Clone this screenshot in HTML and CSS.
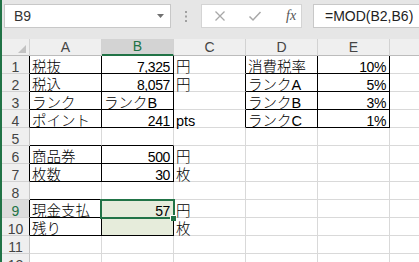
FILE: index.html
```html
<!doctype html>
<html lang="ja">

<head>
    <meta charset="UTF-8">
    <title>Sheet1</title>
    <link rel="stylesheet" href="styles.css">
</head>

<body>
    <div class="app">
        <div class="fbar">
            <div class="namebox">
                <span>B9</span>
                <svg class="drop" width="7" height="4" viewBox="0 0 7 4"><polygon points="0,0 7,0 3.5,4" fill="#707070"/></svg>
            </div>
            <div class="grip">
                <svg width="2" height="11" viewBox="0 0 2 11"><rect x="0" y="0" width="2" height="2" fill="#a0a0a0"/><rect x="0" y="4.5" width="2" height="2" fill="#a0a0a0"/><rect x="0" y="9" width="2" height="2" fill="#a0a0a0"/></svg>
            </div>
            <div class="fxbox">
                <svg class="ico" width="14" height="14" viewBox="0 0 14 14"><path d="M2.5 2.5 L11.5 11.5 M11.5 2.5 L2.5 11.5" stroke="#a8a8a8" stroke-width="1.3" fill="none"/></svg>
                <svg class="ico ok" width="14" height="14" viewBox="0 0 14 14"><path d="M1.5 7.5 L5 11 L12.5 3" stroke="#a8a8a8" stroke-width="1.5" fill="none"/></svg>
                <span class="fx">fx</span>
            </div>
            <div class="formula">=MOD(B2,B6)</div>
        </div>

        <table class="sheet">
            <colgroup>
                <col class="c-rh">
                <col class="c-col"><col class="c-col"><col class="c-col"><col class="c-col"><col class="c-col"><col class="c-col">
            </colgroup>
            <tr class="hdr">
                <th class="corner"><svg width="10" height="10" viewBox="0 0 10 10"><polygon points="9,1 9,9 1,9" fill="#c2c2c2"/></svg></th>
                <th>A</th><th class="sel">B</th><th>C</th><th>D</th><th>E</th><th></th>
            </tr>
            <tr>
                <td class="rh kr">1</td><td class="k">税抜</td><td class="k n">7,325</td><td class="kr">円</td><td class="k">消費税率</td><td class="k n">10%</td><td></td>
            </tr>
            <tr>
                <td class="rh kr">2</td><td class="k">税込</td><td class="k n">8,057</td><td class="kr">円</td><td class="k">ランクA</td><td class="k n">5%</td><td></td>
            </tr>
            <tr>
                <td class="rh kr">3</td><td class="k">ランク</td><td class="k">ランクB</td><td class="kr"></td><td class="k">ランクB</td><td class="k n">3%</td><td></td>
            </tr>
            <tr>
                <td class="rh kr">4</td><td class="k">ポイント</td><td class="k n">241</td><td class="kr">pts</td><td class="k">ランクC</td><td class="k n">1%</td><td></td>
            </tr>
            <tr>
                <td class="rh">5</td><td class="kb"></td><td class="kb"></td><td></td><td></td><td></td><td></td>
            </tr>
            <tr>
                <td class="rh kr">6</td><td class="k">商品券</td><td class="k n">500</td><td>円</td><td></td><td></td><td></td>
            </tr>
            <tr>
                <td class="rh kr">7</td><td class="k">枚数</td><td class="k n">30</td><td>枚</td><td></td><td></td><td></td>
            </tr>
            <tr>
                <td class="rh">8</td><td class="kb"></td><td class="kb"></td><td></td><td></td><td></td><td></td>
            </tr>
            <tr>
                <td class="rh kr cur">9</td><td class="k">現金支払</td>
                <td class="k n fill active">57<div class="cursor"><div class="handle"></div></div></td>
                <td>円</td><td></td><td></td><td></td>
            </tr>
            <tr>
                <td class="rh kr">10</td><td class="k">残り</td><td class="k fill"></td><td>枚</td><td></td><td></td><td></td>
            </tr>
            <tr>
                <td class="rh">11</td><td></td><td></td><td></td><td></td><td></td><td></td>
            </tr>
            <tr>
                <td class="rh">12</td><td></td><td></td><td></td><td></td><td></td><td></td>
            </tr>
        </table>
    </div>
</body>

</html>
```

FILE: styles.css
```css
body {
    margin: 0;
    background: #fff;
}

.app {
    width: 417px;
    height: 262px;
    border-left: 2px solid #217346;
    overflow: hidden;
    background: #fff;
    font-family: "Liberation Sans", "Noto Sans CJK JP", sans-serif;
}

/* formula bar */
.fbar {
    height: 39px;
    box-sizing: border-box;
    padding-top: 4px;
    background: #e6e6e6;
    display: flex;
    align-items: flex-start;
}

.namebox {
    margin-left: 2px;
    width: 167px;
    height: 24px;
    box-sizing: border-box;
    background: #fff;
    border: 1px solid #c8c8c8;
    display: flex;
    align-items: center;
    justify-content: space-between;
    padding: 0 6px 0 9px;
    font-size: 14px;
    color: #333;
}

.grip {
    width: 30px;
    height: 24px;
    display: flex;
    align-items: center;
    justify-content: center;
}

.fxbox {
    width: 101px;
    height: 24px;
    box-sizing: border-box;
    background: #fff;
    border: 1px solid #d4d4d4;
    display: flex;
    align-items: center;
    padding-left: 11px;
}

.ok {
    margin-left: 21px;
}

.fx {
    margin-left: 24px;
    font-family: "Liberation Serif", serif;
    font-style: italic;
    font-size: 14px;
    color: #555;
}

.formula {
    margin-left: 11px;
    flex: 1;
    height: 24px;
    box-sizing: border-box;
    background: #fff;
    border: 1px solid #c8c8c8;
    border-right: none;
    padding-left: 11px;
    font-size: 14px;
    line-height: 22px;
    color: #222;
}

/* grid */
.sheet {
    border-collapse: separate;
    border-spacing: 0;
    table-layout: fixed;
    width: 460px;
    font-size: 14.5px;
    font-weight: 300;
    color: #000;
}

.c-rh {
    width: 28px;
}

.c-col {
    width: 72px;
}

.sheet tr {
    height: 18px;
}

.sheet tr.hdr {
    height: 17px;
}

.sheet th,
.sheet td {
    box-sizing: border-box;
    padding: 0 3px 0 2px;
    border-right: 1px solid #d9d9d9;
    border-bottom: 1px solid #d9d9d9;
    white-space: nowrap;
    vertical-align: bottom;
    line-height: 12px;
}

.sheet th {
    background: #efefef;
    font-weight: normal;
    font-size: 14px;
    color: #444;
    text-align: center;
    border-right-color: #d2d2d2;
    border-bottom-color: #bcbcbc;
    vertical-align: middle;
    line-height: 15px;
    padding: 0;
}

.sheet th.sel {
    background: #d3d3d3;
    color: #217346;
    border-bottom: 2px solid #217346;
}

.corner svg {
    display: block;
    margin: 3px 0 0 15px;
}

.sheet td.rh {
    background: #efefef;
    color: #444;
    font-size: 14px;
    text-align: center;
    padding: 0;
    border-right-color: #c4c4c4;
    border-bottom-color: #d2d2d2;
}

.sheet td.rh.cur {
    background: #dcdcdc;
    color: #217346;
}

.n {
    text-align: right;
    font-size: 14px;
    letter-spacing: -0.4px;
}

.sheet td.k {
    border-right-color: #000;
    border-bottom-color: #000;
}

.sheet td.kr {
    border-right-color: #000;
}

.sheet td.kb {
    border-bottom-color: #000;
}

.fill {
    background: #e6ecdb;
}

.active {
    position: relative;
}

.cursor {
    position: absolute;
    left: -2px;
    top: -1px;
    width: 75px;
    height: 20px;
    box-sizing: border-box;
    border: 2px solid #217346;
}

.handle {
    position: absolute;
    left: 68px;
    top: 14px;
    width: 5px;
    height: 5px;
    background: #217346;
    border-left: 1px solid #fff;
    border-top: 1px solid #fff;
}
```
